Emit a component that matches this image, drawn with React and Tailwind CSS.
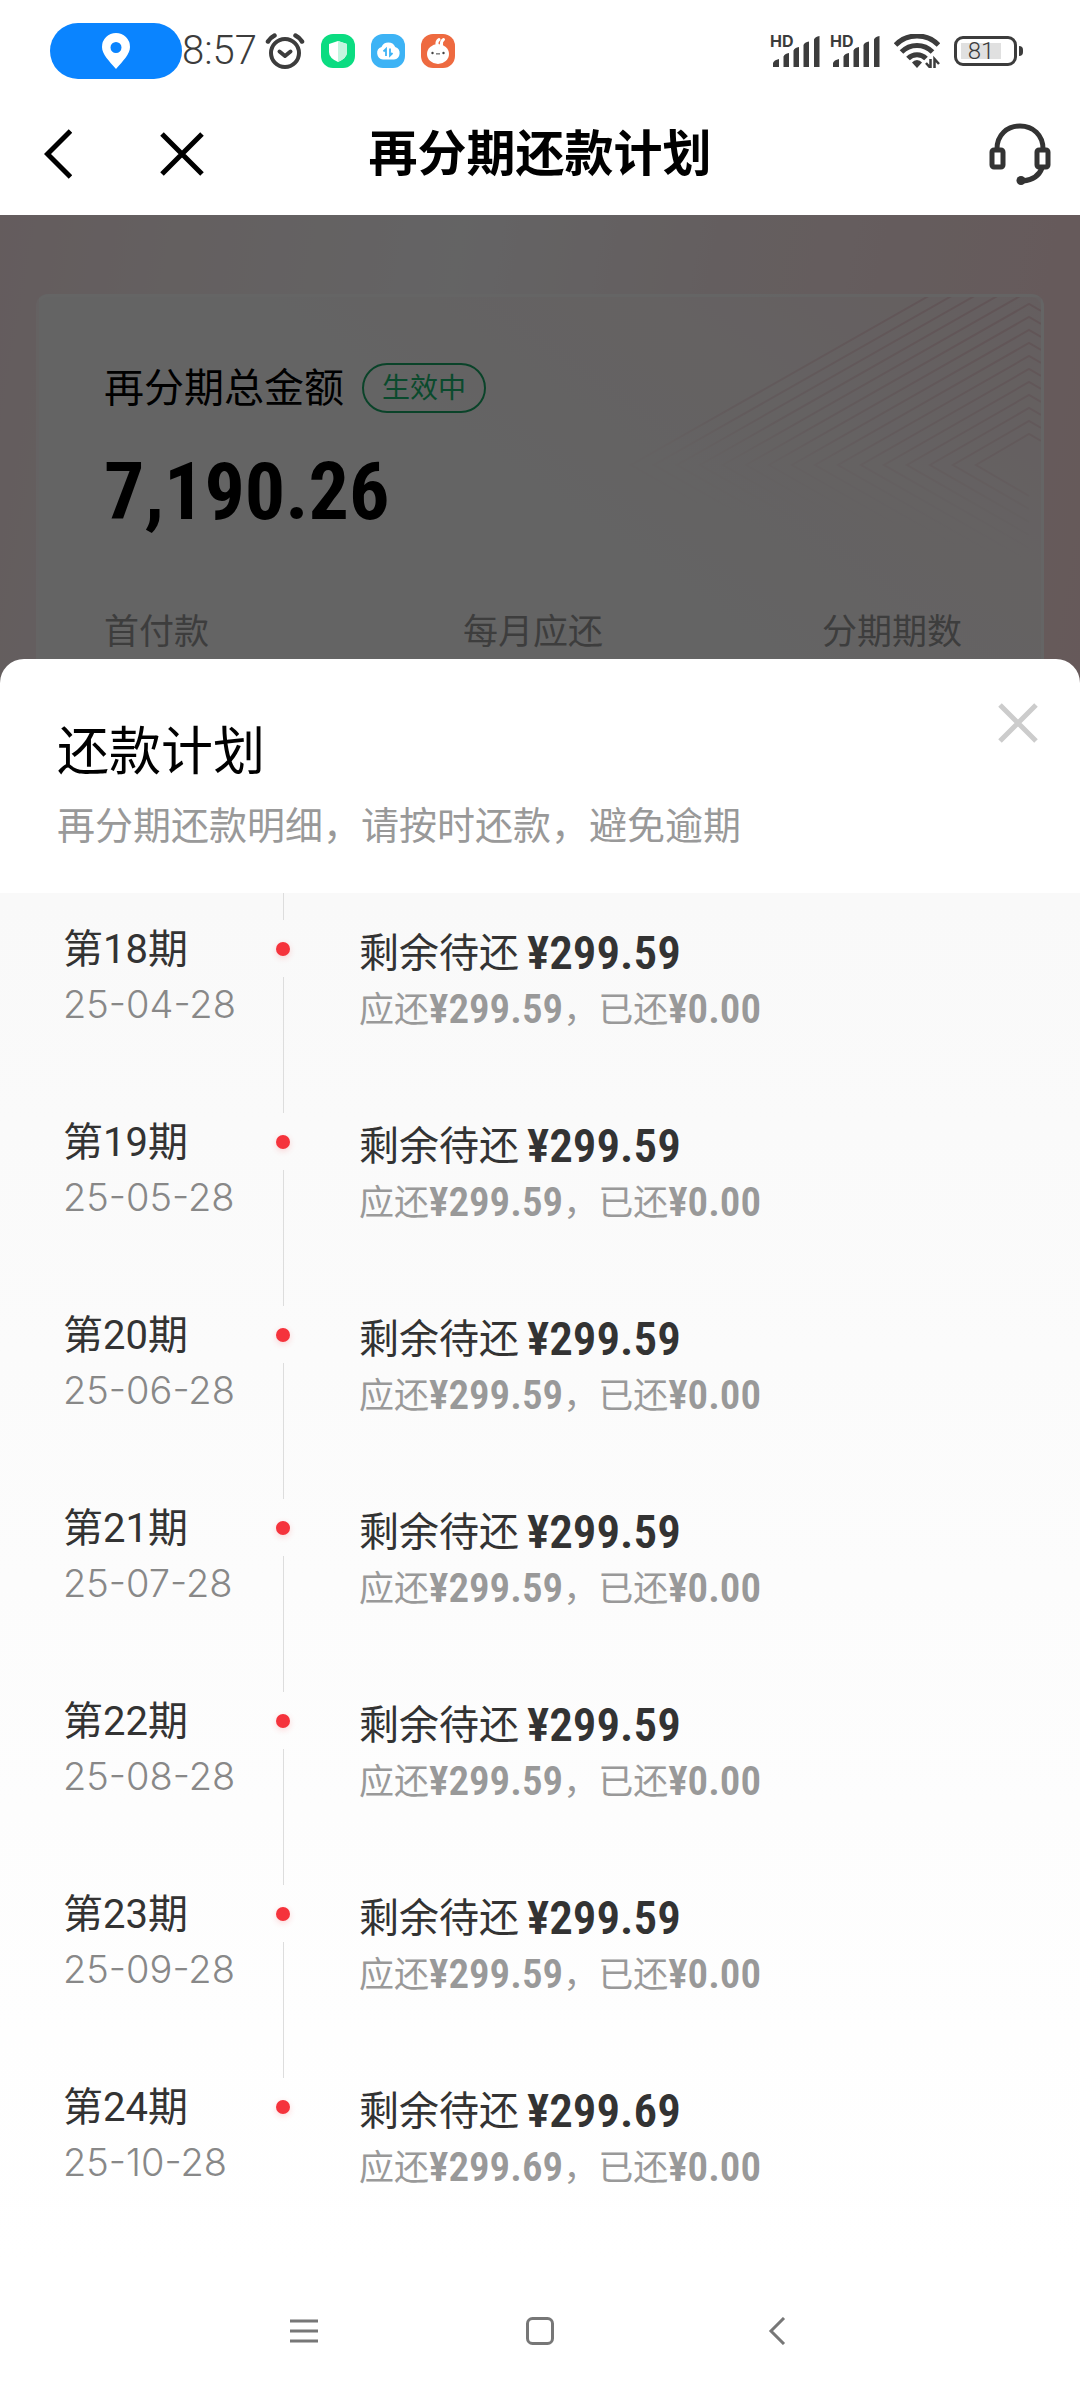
import { useState } from 'react'

const plan = [
  { period: 18, date: '25-04-28', amount: '299.59', paid: '0.00' },
  { period: 19, date: '25-05-28', amount: '299.59', paid: '0.00' },
  { period: 20, date: '25-06-28', amount: '299.59', paid: '0.00' },
  { period: 21, date: '25-07-28', amount: '299.59', paid: '0.00' },
  { period: 22, date: '25-08-28', amount: '299.59', paid: '0.00' },
  { period: 23, date: '25-09-28', amount: '299.59', paid: '0.00' },
  { period: 24, date: '25-10-28', amount: '299.69', paid: '0.00' },
]

const money = "font-['Roboto_Condensed','Roboto',sans-serif]"

function AlarmIcon() {
  return (
    <svg className="w-10 h-9" viewBox="0 0 40 36" fill="none" stroke="#3c3c3c" strokeWidth="4" strokeLinecap="round" strokeLinejoin="round">
      <circle cx="20" cy="20" r="14" />
      <path d="M14.5 18.5l5.5 4.5 5.5-4.5" />
      <path d="M3 8.500q2.500-4 6.500-6M37 8.500q-2.500-4-6.500-6" strokeWidth="4.500" />
    </svg>
  )
}

function GuardIcon() {
  return (
    <svg className="w-[34px] h-[34px]" viewBox="0 0 34 34">
      <rect width="34" height="34" rx="12" fill="#0bdc81" />
      <path d="M17 7l9 3v8q0 6-9 10-9-4-9-10v-8z" fill="#fff" />
      <path d="M17 7l9 3v8q0 6-9 10z" fill="#c3f5df" />
    </svg>
  )
}

function CloudIcon() {
  return (
    <svg className="w-[34px] h-[34px]" viewBox="0 0 34 34">
      <rect width="34" height="34" rx="12" fill="#3db3f5" />
      <path d="M12 25.500a6.500 6.500 0 0 1-1.500-12.600 7.500 7.500 0 0 1 13.700 0A6.500 6.500 0 0 1 23 25.500z" fill="#fff" />
      <path d="M15 22v-7l-2.500 2.500M19 14.500v7l2.500-2.500" fill="none" stroke="#3db3f5" strokeWidth="1.800" />
    </svg>
  )
}

function RabbitIcon() {
  return (
    <svg className="w-[34px] h-[34px]" viewBox="0 0 34 34">
      <rect width="34" height="34" rx="12" fill="#ee6a40" />
      <ellipse cx="17" cy="20" rx="11" ry="10" fill="#fff" />
      <path d="M16 11q-.5-4 2-5.500M20.500 11q-.5-4 2-5.500" stroke="#fff" strokeWidth="3" strokeLinecap="round" />
      <circle cx="11.500" cy="19" r="1.200" fill="#444" />
      <circle cx="22.500" cy="19" r="1.200" fill="#444" />
      <path d="M15 19.500q1 1.500 2 0 1 1.500 2 0" fill="none" stroke="#444" />
    </svg>
  )
}

function Signal() {
  return (
    <div className="relative w-[50px] h-8">
      <span className="absolute left-0 top-0 text-base leading-[12px] font-bold font-['Inter',sans-serif] text-[#3c3c3c]">HD</span>
      <svg className="w-full h-full" viewBox="0 0 50 32" fill="#3c3c3c">
        <path d="M3 32v-4q1-3 6-4v8zM13.500 32V21.500q1-3 5.500-3.500v14zM23.500 32V15.500q1-3 5.500-3.500v20zM33.500 32V10q1-3 5.500-3.500V32zM44 32V4.500q1-3 5.500-3.500v31z" />
      </svg>
    </div>
  )
}

function WifiIcon() {
  return (
    <svg className="w-[46px] h-[34px]" viewBox="0 0 46 34" fill="none" stroke="#3c3c3c" strokeWidth="5">
      <path d="M1.500 11a30 30 0 0 1 43 0" />
      <path d="M7.500 18a21.500 21.500 0 0 1 31 0" />
      <path d="M14 24.500a12.500 12.500 0 0 1 18 0" />
      <path d="M23 26q3 0 5 2.500l-5 5.500-5-5.500q2-2.500 5-2.500z" fill="#3c3c3c" stroke="none" />
      <path d="M36.500 25v9l-4.500-5M40.500 34v-9l4.500 5" strokeWidth="2.500" />
    </svg>
  )
}

function StatusBar() {
  return (
    <div className="flex items-center justify-between h-[102px] pl-[50px] pr-[57px]">
      <div className="flex items-center">
        <div className="flex items-center justify-center w-[132px] h-14 rounded-full bg-[#0a84ff]">
          <svg className="w-7 h-9" viewBox="0 0 28 36">
            <path d="M14 0a14 14 0 0 1 14 14c0 7-7 14-14 22C7 28 0 21 0 14A14 14 0 0 1 14 0zm0 9a5.500 5.500 0 1 0 0 11 5.500 5.500 0 0 0 0-11z" fill="#fff" />
          </svg>
        </div>
        <span className="w-[83px] text-[40px] leading-none font-light font-['Roboto',sans-serif] text-[#3c3c3c]">8:57</span>
        <div className="flex items-center gap-4">
          <AlarmIcon />
          <GuardIcon />
          <CloudIcon />
          <RabbitIcon />
        </div>
      </div>
      <div className="flex items-center gap-2.5">
        <Signal />
        <Signal />
        <div className="px-1">
          <WifiIcon />
        </div>
        <div className="flex items-center gap-0.5">
          <div className="flex p-1 w-[63px] h-[30px] rounded-[9px] border-[3px] border-[#3c3c3c]">
            <div className="flex items-center justify-center w-10 h-full bg-[#e0e0e0]">
              <span className="text-2xl leading-none font-light font-['Roboto',sans-serif] text-[#3c3c3c]">81</span>
            </div>
          </div>
          <div className="w-1 h-2.5 rounded-r-sm bg-[#3c3c3c]" />
        </div>
      </div>
    </div>
  )
}

function NavBar() {
  return (
    <header className="grid grid-cols-[1fr_auto_1fr] items-center h-[113px] pb-2.5 px-[29px]">
      <div className="flex items-center gap-[88px] pl-[15px]">
        <button type="button" aria-label="返回">
          <svg className="w-7 h-[50px]" viewBox="0 0 28 50" fill="none" stroke="#000" strokeWidth="5">
            <path d="M26.500 2L3.500 25l23 23" />
          </svg>
        </button>
        <button type="button" aria-label="关闭">
          <svg className="w-11 h-11" viewBox="0 0 44 44" fill="none" stroke="#000" strokeWidth="5">
            <path d="M2 2l40 40M42 2L2 42" />
          </svg>
        </button>
      </div>
      <h1 className="text-[49px] leading-[56px] font-bold text-black">再分期还款计划</h1>
      <button type="button" aria-label="客服" className="justify-self-end">
        <svg className="w-[62px] h-[62px]" viewBox="0 0 62 62" fill="none" stroke="#333" strokeWidth="5">
          <rect x="3" y="27" width="11" height="17" rx="2" />
          <rect x="48" y="27" width="11" height="17" rx="2" />
          <path d="M8 26C8 12 18 3 31 3s23 9 23 23M53 45c-3 8-9 12-19 13" />
          <circle cx="32" cy="57.500" r="4.500" fill="#333" stroke="none" />
        </svg>
      </button>
    </header>
  )
}

function CardPattern() {
  const lines = Array.from({ length: 16 }, (_, k) => k)
  return (
    <svg className="absolute right-0 top-0 w-[417px] h-[362px]" viewBox="0 0 417 362" fill="none">
      <defs>
        <linearGradient id="fade" gradientUnits="userSpaceOnUse" x1="300" y1="0" x2="260" y2="240">
          <stop offset="0" stopColor="#d98c9a" stopOpacity="0.260" />
          <stop offset="0.600" stopColor="#d98c9a" stopOpacity="0.160" />
          <stop offset="0.800" stopColor="#d98c9a" stopOpacity="0.040" />
          <stop offset="1" stopColor="#d98c9a" stopOpacity="0" />
        </linearGradient>
      </defs>
      {lines.map((k) => (
        <path
          key={k}
          d={`M417 ${-51 + 13 * k}L405 ${-58 + 13 * k}L${7 + 23 * k} 168L405 ${394 - 13 * k}`}
          stroke="url(#fade)"
          strokeWidth="2"
        />
      ))}
    </svg>
  )
}

function Summary() {
  return (
    <section className="relative px-9 pt-[79px] bg-[linear-gradient(100deg,#fbe6e9_0%,#fbeff0_15%,#f9f9fb_40%,#fbecee_62%,#ffdfe1_100%)]">
      <div className="relative h-[389px] pt-[61px] pl-[65px] pr-[79px] rounded-t-xl border-x-3 border-t-3 border-white/40 bg-[linear-gradient(35deg,#fafafa_45%,#fcf4f5_75%,#fcecee_100%)] overflow-hidden">
        <CardPattern />
        <div className="relative">
          <div className="flex items-center gap-[18px]">
            <h2 className="text-[40px] leading-[60px] text-black">再分期总金额</h2>
            <span className="flex items-center h-[50px] px-[18px] rounded-full border-2 border-[#19a868] text-[28px] leading-none text-[#19b970]">生效中</span>
          </div>
          <p className={`mt-[26px] text-[80px] leading-[96px] font-bold text-black ${money}`}>7,190.26</p>
          <div className="grid grid-cols-[1fr_1fr_auto] mt-[66px] text-[35px] leading-[50px] text-[#999]">
            <span>首付款</span>
            <span>每月应还</span>
            <span>分期期数</span>
          </div>
        </div>
      </div>
      <div className="absolute inset-0 bg-black/60" />
    </section>
  )
}

function PlanRow({ item, last }) {
  return (
    <li className="flex">
      <div className="w-[213px] pt-1.5">
        <h3 className="text-[40px] leading-[48px] text-[#333] font-['Roboto','Noto_Sans_CJK_SC',sans-serif]">第{item.period}期</h3>
        <p className="mt-1.5 text-[38px] leading-[48px] font-light text-[#888]">{item.date}</p>
      </div>
      <div className="flex flex-col items-center">
        <div className="flex items-center h-[57px]">
          <div className="w-3.5 h-3.5 rounded-full bg-[#f5333c] shadow-[0_2px_6px_#f5333c33]" />
        </div>
        <div className={last ? 'h-[100px]' : 'w-px h-[136px] bg-[#ddd]'} />
      </div>
      <div className="pl-[69px] pt-1">
        <p className="flex items-center gap-2 text-[40px] leading-[58px] text-[#333]">
          剩余待还
          <span className={`text-[47px] font-semibold ${money}`}>¥{item.amount}</span>
        </p>
        <p className="flex items-center text-[35px] leading-[54px] text-[#999]">
          应还<span className={`text-[41px] font-semibold ${money}`}>¥{item.amount}</span>，已还
          <span className={`text-[41px] font-semibold ${money}`}>¥{item.paid}</span>
        </p>
      </div>
    </li>
  )
}

function SystemNav() {
  return (
    <nav className="grid grid-cols-[1fr_auto_1fr] items-center gap-[208px] h-[138px]">
      <button type="button" aria-label="最近任务" className="justify-self-end">
        <svg className="w-7 h-7" viewBox="0 0 28 28" stroke="#777" strokeWidth="3">
          <path d="M0 4h28M0 14h28M0 24h28" />
        </svg>
      </button>
      <button type="button" aria-label="主页">
        <svg className="w-7 h-7" viewBox="0 0 28 28" fill="none" stroke="#777" strokeWidth="3">
          <rect x="1.500" y="1.500" width="25" height="25" rx="5" />
        </svg>
      </button>
      <button type="button" aria-label="返回上一页">
        <svg className="w-7 h-7" viewBox="0 0 28 28" fill="none" stroke="#777" strokeWidth="3">
          <path d="M22 1L9 14l13 13" />
        </svg>
      </button>
    </nav>
  )
}

export default function App() {
  const [open, setOpen] = useState(true)

  return (
    <div className="flex flex-col min-h-screen bg-white font-['Inter','Noto_Sans_CJK_SC',sans-serif]">
      <StatusBar />
      <NavBar />
      <Summary />
      {open && (
        <section role="dialog" aria-label="还款计划" className="relative -mt-6 flex-1 flex flex-col rounded-t-[24px] bg-white">
          <div className="flex justify-between h-[234px] pl-[57px] pr-[42px] pt-11">
            <div className="pt-5">
              <h2 className="text-[52px] leading-[58px] text-black">还款计划</h2>
              <p className="mt-[18px] text-[38px] leading-[52px] text-[#999]">再分期还款明细，请按时还款，避免逾期</p>
            </div>
            <button type="button" aria-label="关闭还款计划" className="self-start" onClick={() => setOpen(false)}>
              <svg className="w-10 h-10" viewBox="0 0 40 40" fill="none" stroke="#ccc" strokeWidth="5">
                <path d="M2 2l36 36M38 2L2 38" />
              </svg>
            </button>
          </div>
          <div className="flex-1 pl-[63px] bg-linear-to-b from-[#f9f9f9] to-white">
            <div className="w-px h-[27px] ml-[220px] bg-[#ddd]" />
            <ul>
              {plan.map((item, i) => (
                <PlanRow key={item.period} item={item} last={i === plan.length - 1} />
              ))}
            </ul>
          </div>
        </section>
      )}
      <SystemNav />
    </div>
  )
}
